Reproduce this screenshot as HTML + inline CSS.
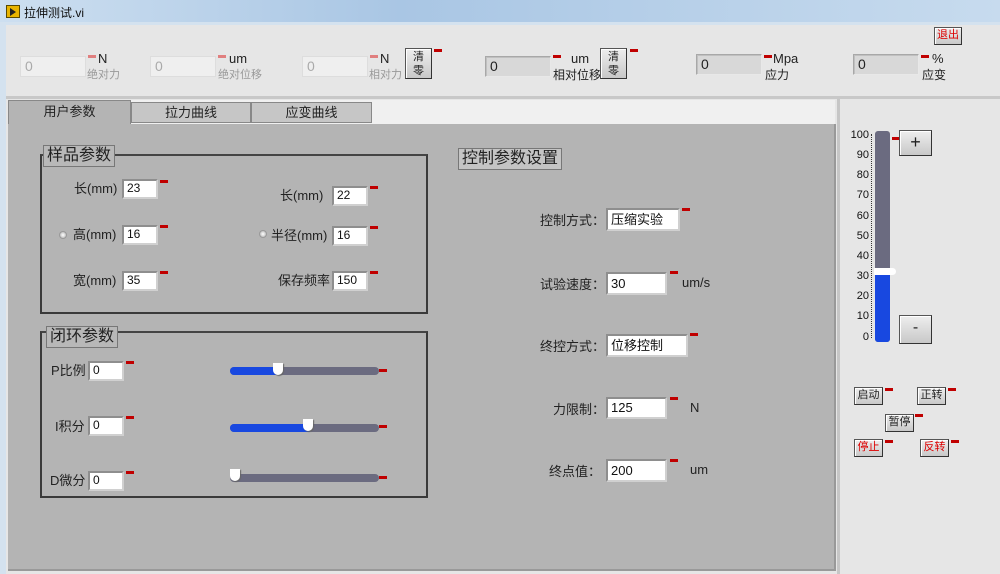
<!DOCTYPE html>
<html><head><meta charset="utf-8"><style>
*{margin:0;padding:0;box-sizing:border-box}
body{width:1000px;height:574px;overflow:hidden;position:relative;background:#d4e2ef;font-family:"Liberation Sans","Noto Sans CJK SC",sans-serif;font-size:13px;color:#222}
.a{position:absolute;white-space:nowrap}
.in{position:absolute;background:#fff;border:2px solid #8e8e8e;border-right-color:#d0d0d0;border-bottom-color:#d0d0d0;padding-left:3px;font-size:12px;line-height:15px;color:#111}
.tin{position:absolute;background:#d8d8d8;border:1px solid #a8a8a8;border-right-color:#e8e8e8;border-bottom-color:#e8e8e8;box-shadow:inset 1px 1px 0 #c0c0c0;padding-left:4px;font-size:14px;line-height:19px}
.r{position:absolute;width:8px;height:3px;background:#c00000}
.rl{position:absolute;width:8px;height:3px;background:#e07f7f}
.btn{position:absolute;background:linear-gradient(#eee,#c8c8c8);border:1px solid #555;border-right-color:#333;border-bottom-color:#333;box-shadow:inset 1px 1px 0 #fff;text-align:center;font-size:11px}
.grp{position:absolute;border:2px solid #3a3a3a;border-top-color:#444}
.gl{position:absolute;background:#b8b8b8;border:1px solid #777;font-size:16px;line-height:20px;padding:0 3px}
.sl{position:absolute;height:8px;width:149px;background:#6b6b80;border-radius:4px;overflow:hidden}
.sl i{position:absolute;left:0;top:0;bottom:0;background:#1848e0}
.th{position:absolute;width:10px;height:12px;background:#fff;border-radius:0 0 5px 5px;box-shadow:1px 1px 1px #666}
.rad{position:absolute;width:8px;height:8px;border-radius:50%;background:radial-gradient(#fff,#aaa);border:1px solid #999}
.sc{position:absolute;right:131px;font-size:11px;color:#111}
</style></head><body>
<div class="a" style="left:0;top:0;width:1000px;height:22px;background:linear-gradient(90deg,#cddff0,#a9c6e4 40%,#c7dbee)"></div>
<div class="a" style="left:6px;top:5px;width:14px;height:13px;background:#e8b400;border:1px solid #5a4a00"></div>
<div class="a" style="left:10px;top:8px;width:0;height:0;border-left:6px solid #222;border-top:4px solid transparent;border-bottom:4px solid transparent"></div>
<div class="a" style="left:24px;top:4px;font-size:12px;color:#111">拉伸测试.vi</div>
<div class="a" style="left:6px;top:25px;width:994px;height:549px;background:#e6e6e6"></div>
<div class="a" style="left:6px;top:96px;width:994px;height:3px;background:#c8c8c8"></div>

<!-- top row -->
<div class="tin" style="left:20px;top:56px;width:66px;height:21px;background:#efefef;color:#aaa;border-color:#ddd;box-shadow:none">0</div>
<div class="rl" style="left:88px;top:55px"></div><div class="a" style="left:98px;top:51px">N</div>
<div class="a" style="left:87px;top:66px;font-size:11px;color:#999">绝对力</div>
<div class="tin" style="left:150px;top:56px;width:66px;height:21px;background:#efefef;color:#aaa;border-color:#ddd;box-shadow:none">0</div>
<div class="rl" style="left:218px;top:55px"></div><div class="a" style="left:229px;top:51px">um</div>
<div class="a" style="left:218px;top:66px;font-size:11px;color:#999">绝对位移</div>
<div class="tin" style="left:302px;top:56px;width:66px;height:21px;background:#efefef;color:#aaa;border-color:#ddd;box-shadow:none">0</div>
<div class="rl" style="left:370px;top:55px"></div><div class="a" style="left:380px;top:51px">N</div>
<div class="a" style="left:369px;top:66px;font-size:11px;color:#999">相对力</div>
<div class="btn" style="left:405px;top:48px;width:27px;height:31px;line-height:14px;padding-top:1px">清<br>零</div>
<div class="r" style="left:434px;top:49px"></div>
<div class="tin" style="left:485px;top:56px;width:66px;height:21px">0</div>
<div class="r" style="left:553px;top:55px"></div><div class="a" style="left:571px;top:51px">um</div>
<div class="a" style="left:553px;top:66px;font-size:12px">相对位移</div>
<div class="btn" style="left:600px;top:48px;width:27px;height:31px;line-height:14px;padding-top:1px">清<br>零</div>
<div class="r" style="left:630px;top:49px"></div>
<div class="tin" style="left:696px;top:54px;width:66px;height:21px">0</div>
<div class="r" style="left:764px;top:55px"></div><div class="a" style="left:773px;top:51px">Mpa</div>
<div class="a" style="left:765px;top:66px;font-size:12px">应力</div>
<div class="tin" style="left:853px;top:54px;width:66px;height:21px">0</div>
<div class="r" style="left:921px;top:55px"></div><div class="a" style="left:932px;top:51px">%</div>
<div class="a" style="left:922px;top:66px;font-size:12px">应变</div>
<div class="btn" style="left:934px;top:27px;width:28px;height:18px;color:#d00;line-height:15px">退出</div>

<!-- tabs -->
<div class="a" style="left:8px;top:100px;width:827px;height:24px;background:#f0f0f0"></div>
<div class="a" style="left:8px;top:100px;width:123px;height:25px;background:#b4b4b4;border:1px solid #888;border-bottom:none;text-align:center;line-height:21px">用户参数</div>
<div class="a" style="left:131px;top:102px;width:120px;height:21px;background:#c6c6c6;border:1px solid #888;text-align:center;line-height:19px">拉力曲线</div>
<div class="a" style="left:251px;top:102px;width:121px;height:21px;background:#c6c6c6;border:1px solid #888;text-align:center;line-height:19px">应变曲线</div>
<div class="a" style="left:8px;top:124px;width:828px;height:447px;background:#b4b4b4;border-right:2px solid #999;border-bottom:2px solid #999"></div>
<div class="a" style="left:837px;top:99px;width:3px;height:475px;background:#c6c6c6"></div>

<!-- group 1 -->
<div class="grp" style="left:40px;top:154px;width:388px;height:160px"></div>
<div class="gl" style="left:43px;top:145px">样品参数</div>
<div class="a" style="left:74px;top:178px">长(mm)</div>
<div class="in" style="left:122px;top:179px;width:36px;height:20px">23</div><div class="r" style="left:160px;top:180px"></div>
<div class="rad" style="left:59px;top:231px"></div>
<div class="a" style="left:73px;top:224px">高(mm)</div>
<div class="in" style="left:122px;top:225px;width:36px;height:20px">16</div><div class="r" style="left:160px;top:225px"></div>
<div class="a" style="left:73px;top:270px">宽(mm)</div>
<div class="in" style="left:122px;top:271px;width:36px;height:20px">35</div><div class="r" style="left:160px;top:271px"></div>
<div class="a" style="left:280px;top:185px">长(mm)</div>
<div class="in" style="left:332px;top:186px;width:36px;height:20px">22</div><div class="r" style="left:370px;top:186px"></div>
<div class="rad" style="left:259px;top:230px"></div>
<div class="a" style="left:271px;top:225px">半径(mm)</div>
<div class="in" style="left:332px;top:226px;width:36px;height:20px">16</div><div class="r" style="left:370px;top:226px"></div>
<div class="a" style="left:278px;top:270px">保存频率</div>
<div class="in" style="left:332px;top:271px;width:36px;height:20px">150</div><div class="r" style="left:370px;top:271px"></div>

<!-- group 2 -->
<div class="grp" style="left:40px;top:331px;width:388px;height:167px"></div>
<div class="gl" style="left:46px;top:326px">闭环参数</div>
<div class="a" style="left:51px;top:360px">P比例</div>
<div class="in" style="left:88px;top:361px;width:36px;height:20px">0</div><div class="r" style="left:126px;top:361px"></div>
<div class="sl" style="left:230px;top:367px"><i style="width:50px"></i></div><div class="th" style="left:273px;top:363px"></div><div class="r" style="left:379px;top:369px"></div>
<div class="a" style="left:55px;top:416px">I积分</div>
<div class="in" style="left:88px;top:416px;width:36px;height:20px">0</div><div class="r" style="left:126px;top:416px"></div>
<div class="sl" style="left:230px;top:424px"><i style="width:80px"></i></div><div class="th" style="left:303px;top:419px"></div><div class="r" style="left:379px;top:425px"></div>
<div class="a" style="left:50px;top:470px">D微分</div>
<div class="in" style="left:88px;top:471px;width:36px;height:20px">0</div><div class="r" style="left:126px;top:471px"></div>
<div class="sl" style="left:230px;top:474px"></div><div class="th" style="left:230px;top:469px"></div><div class="r" style="left:379px;top:476px"></div>

<!-- control -->
<div class="gl" style="left:458px;top:148px;background:#c4c4c4">控制参数设置</div>
<div class="a" style="left:540px;top:210px">控制方式：</div>
<div class="in" style="left:606px;top:208px;width:74px;height:23px;font-size:13px;line-height:19px">压缩实验</div><div class="r" style="left:682px;top:208px"></div>
<div class="a" style="left:540px;top:274px">试验速度：</div>
<div class="in" style="left:606px;top:272px;width:61px;height:23px;font-size:13px;line-height:19px">30</div><div class="r" style="left:670px;top:271px"></div>
<div class="a" style="left:682px;top:275px">um/s</div>
<div class="a" style="left:540px;top:336px">终控方式：</div>
<div class="in" style="left:606px;top:334px;width:82px;height:23px;font-size:13px;line-height:19px">位移控制</div><div class="r" style="left:690px;top:333px"></div>
<div class="a" style="left:553px;top:399px">力限制：</div>
<div class="in" style="left:606px;top:397px;width:61px;height:22px;font-size:13px;line-height:18px">125</div><div class="r" style="left:670px;top:397px"></div>
<div class="a" style="left:690px;top:400px">N</div>
<div class="a" style="left:549px;top:461px">终点值：</div>
<div class="in" style="left:606px;top:459px;width:61px;height:23px;font-size:13px;line-height:19px">200</div><div class="r" style="left:670px;top:459px"></div>
<div class="a" style="left:690px;top:462px">um</div>

<!-- right panel -->
<div class="sc" style="top:129px">100</div><div class="sc" style="top:149px">90</div><div class="sc" style="top:169px">80</div><div class="sc" style="top:189px">70</div><div class="sc" style="top:210px">60</div><div class="sc" style="top:230px">50</div><div class="sc" style="top:250px">40</div><div class="sc" style="top:270px">30</div><div class="sc" style="top:290px">20</div><div class="sc" style="top:310px">10</div><div class="sc" style="top:331px">0</div>
<div class="a" style="left:871px;top:134px;width:0;height:204px;border-left:1px dotted #333"></div>
<div class="a" style="left:875px;top:131px;width:15px;height:211px;background:#6b6b80;border-radius:3px;overflow:hidden"><div style="position:absolute;left:0;right:0;bottom:0;height:71px;background:#1848e0"></div></div>
<div class="a" style="left:874px;top:268px;width:22px;height:7px;background:#fff;border-radius:0 4px 4px 0"></div>
<div class="r" style="left:892px;top:137px"></div>
<div class="btn" style="left:899px;top:130px;width:33px;height:26px;font-size:18px;line-height:23px">+</div>
<div class="btn" style="left:899px;top:315px;width:33px;height:29px;font-size:16px;line-height:24px">-</div>
<div class="btn" style="left:854px;top:387px;width:29px;height:18px;line-height:15px">启动</div><div class="r" style="left:885px;top:388px"></div>
<div class="btn" style="left:917px;top:387px;width:29px;height:18px;line-height:15px">正转</div><div class="r" style="left:948px;top:388px"></div>
<div class="btn" style="left:885px;top:414px;width:29px;height:18px;line-height:15px">暂停</div><div class="r" style="left:915px;top:414px"></div>
<div class="btn" style="left:854px;top:439px;width:29px;height:18px;line-height:15px;color:#d00">停止</div><div class="r" style="left:885px;top:440px"></div>
<div class="btn" style="left:920px;top:439px;width:29px;height:18px;line-height:15px;color:#d00">反转</div><div class="r" style="left:951px;top:440px"></div>
</body></html>
